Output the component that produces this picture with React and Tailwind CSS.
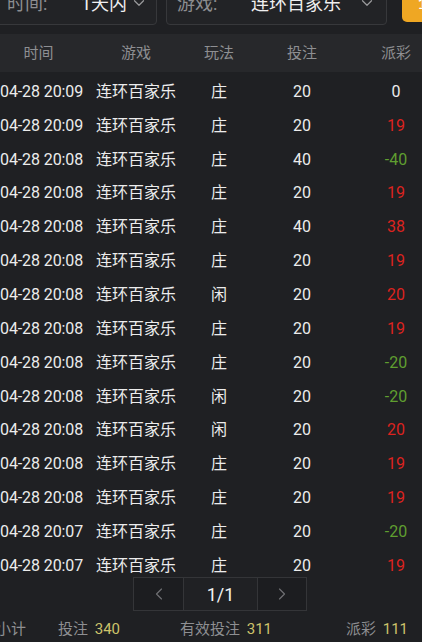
import React from "react";
import { ChevronDown, ChevronLeft, ChevronRight } from "lucide-react";

const rows = [
  { time: "04-28 20:09", play: "庄", bet: 20, win: 0 },
  { time: "04-28 20:09", play: "庄", bet: 20, win: 19 },
  { time: "04-28 20:08", play: "庄", bet: 40, win: -40 },
  { time: "04-28 20:08", play: "庄", bet: 20, win: 19 },
  { time: "04-28 20:08", play: "庄", bet: 40, win: 38 },
  { time: "04-28 20:08", play: "庄", bet: 20, win: 19 },
  { time: "04-28 20:08", play: "闲", bet: 20, win: 20 },
  { time: "04-28 20:08", play: "庄", bet: 20, win: 19 },
  { time: "04-28 20:08", play: "庄", bet: 20, win: -20 },
  { time: "04-28 20:08", play: "闲", bet: 20, win: -20 },
  { time: "04-28 20:08", play: "闲", bet: 20, win: 20 },
  { time: "04-28 20:08", play: "庄", bet: 20, win: 19 },
  { time: "04-28 20:08", play: "庄", bet: 20, win: 19 },
  { time: "04-28 20:07", play: "庄", bet: 20, win: -20 },
  { time: "04-28 20:07", play: "庄", bet: 20, win: 19 },
];

const cols = "grid grid-cols-[77px_118px_48px_118px_1fr] items-center";

const winColor = (v) => {
  if (v > 0) return "text-[#dc231f]";
  if (v < 0) return "text-[#5f9e30]";
  return "text-[#ececec]";
};

const App = () => {
  return (
    <div
      className="w-[422px] h-[642px] overflow-hidden bg-[#1f2023] text-[#ececec]"
      style={{ fontFamily: "Roboto, 'Noto Sans CJK SC', sans-serif" }}
    >
      {/* filters */}
      <div className="flex flex-col h-[34px]">
        <div className="flex items-stretch gap-[9px] mt-[-19px] h-[44px] ml-[-10px] whitespace-nowrap">
          <div className="w-[167px] shrink-0 flex items-center rounded-[4px] border border-[#37383b] bg-[#222326] pl-[16px] pr-[8px]">
            <span className="shrink-0 text-[18px] text-[#8d8e91] w-[74px]">时间:</span>
            <span className="text-[18px] text-[#f0f0f0] flex-1">1天内</span>
            <ChevronDown size={18} strokeWidth={1.6} className="shrink-0 text-[#9a9a9c]" />
          </div>
          <div className="w-[221px] shrink-0 flex items-center rounded-[4px] border border-[#37383b] bg-[#222326] pl-[10px] pr-[10px]">
            <span className="shrink-0 text-[18px] text-[#8d8e91] w-[74px]">游戏:</span>
            <span className="text-[18px] text-[#f0f0f0] flex-1">连环百家乐</span>
            <ChevronDown size={18} strokeWidth={1.6} className="shrink-0 text-[#9a9a9c]" />
          </div>
          <div className="shrink-0 ml-[6px] w-[60px] h-[41px] rounded-[5px] bg-[#efa723] flex items-center pl-[16px] text-[18px] text-white overflow-hidden">
            查询
          </div>
        </div>
      </div>

      {/* header */}
      <div className={`${cols} h-[38px] bg-[#27282b] text-[15px] text-[#8e8f92] text-center`}>
        <div>时间</div>
        <div>游戏</div>
        <div>玩法</div>
        <div>投注</div>
        <div className="pl-[9px]">派彩</div>
      </div>

      {/* rows */}
      <div className="h-[505px] overflow-hidden pt-[3px]">
        {rows.map((r, i) => (
          <div key={i} className={`${cols} h-[33.85px] text-[16px] text-center`}>
            <div className="whitespace-nowrap tracking-[-0.1px]">{r.time}</div>
            <div>连环百家乐</div>
            <div>{r.play}</div>
            <div>{r.bet}</div>
            <div className={`pl-[9px] ${winColor(r.win)}`}>{r.win}</div>
          </div>
        ))}
      </div>

      {/* pager */}
      <div className="flex pl-[133px]">
        <div className="flex h-[34px] border border-[#343538] bg-[#1c1d20]">
          <div className="w-[49px] flex items-center justify-center text-[#6f7073]">
            <ChevronLeft size={20} strokeWidth={1.4} />
          </div>
          <div className="w-[75px] flex items-center justify-center border-x border-[#343538] bg-[#202124] text-[18px] text-[#f2f2f2]">
            1/1
          </div>
          <div className="w-[48px] flex items-center justify-center text-[#6f7073]">
            <ChevronRight size={20} strokeWidth={1.4} />
          </div>
        </div>
      </div>

      {/* totals */}
      <div className="h-[31px] pt-[6px] flex items-center text-[15px] whitespace-nowrap">
        <div className="w-[58px] ml-[-4px] text-[#8e8f92]">小计</div>
        <div className="w-[122px] ml-[4px] text-[#8e8f92]">
          投注 <span className="ml-[3px] text-[#cdc36b]">340</span>
        </div>
        <div className="w-[166px] text-[#8e8f92]">
          有效投注 <span className="ml-[3px] text-[#cdc36b]">311</span>
        </div>
        <div className="text-[#8e8f92]">
          派彩 <span className="ml-[3px] text-[#cdc36b]">111</span>
        </div>
      </div>
    </div>
  );
};

export default App;
